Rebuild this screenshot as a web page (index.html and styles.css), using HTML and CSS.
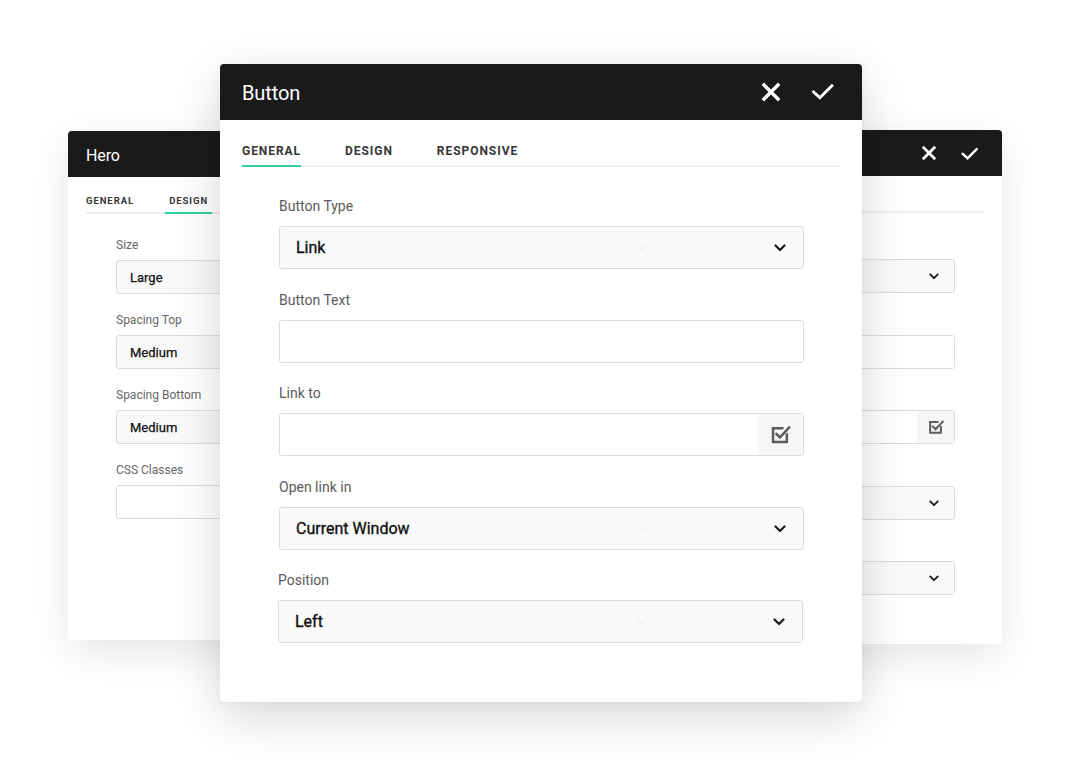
FILE: index.html
```html
<!DOCTYPE html>
<html lang="en">
<head>
<meta charset="utf-8">
<title>Button settings</title>
<link rel="stylesheet" href="styles.css">
</head>
<body>
<div class="desk">

  <section class="panel back hero">
    <header class="phead small">
      <h2>Hero</h2>
    </header>
    <nav class="tabs stabs">
      <span class="tab">GENERAL</span>
      <span class="tab active">DESIGN</span>
    </nav>
    <div class="form sform">
      <div class="field"><label>Size</label><div class="select"><span>Large</span></div></div>
      <div class="field"><label>Spacing Top</label><div class="select"><span>Medium</span></div></div>
      <div class="field"><label>Spacing Bottom</label><div class="select"><span>Medium</span></div></div>
      <div class="field"><label>CSS Classes</label><div class="input"></div></div>
    </div>
  </section>

  <section class="panel back side">
    <header class="phead small">
      <h2>Column</h2>
      <div class="acts">
        <svg class="ico-x" viewBox="0 0 24 24"><path d="M5 5L19 19M19 5L5 19"/></svg>
        <svg class="ico-ok" viewBox="0 0 24 24"><path d="M3.5 12.5L9.5 18L21 6.5"/></svg>
      </div>
    </header>
    <nav class="tabs stabs">
      <span class="tab active">GENERAL</span>
      <span class="tab">DESIGN</span>
    </nav>
    <div class="form sform">
      <div class="field"><label>Width</label><div class="select"><span>Auto</span><svg class="chev" viewBox="0 0 12 8"><path d="M1.5 1.5L6 6L10.5 1.5"/></svg></div></div>
      <div class="field"><label>Title</label><div class="input"></div></div>
      <div class="field"><label>Link to</label><div class="input link"><div class="linkbtn"><svg class="ico-link" viewBox="0 0 20 20"><path d="M15.5 10v6.5h-12v-12h8"/><path d="M6.5 9.5l3 3L17.5 4"/></svg></div></div></div>
      <div class="field"><label>Alignment</label><div class="select"><span>Left</span><svg class="chev" viewBox="0 0 12 8"><path d="M1.5 1.5L6 6L10.5 1.5"/></svg></div></div>
      <div class="field"><label>Visibility</label><div class="select"><span>All</span><svg class="chev" viewBox="0 0 12 8"><path d="M1.5 1.5L6 6L10.5 1.5"/></svg></div></div>
    </div>
  </section>

  <section class="panel main">
    <header class="phead">
      <h2>Button</h2>
      <div class="acts">
        <svg class="ico-x" viewBox="0 0 24 24"><path d="M5 5L19 19M19 5L5 19"/></svg>
        <svg class="ico-ok" viewBox="0 0 24 24"><path d="M3.5 12.5L9.5 18L21 6.5"/></svg>
      </div>
    </header>
    <nav class="tabs mtabs">
      <span class="tab active">GENERAL</span>
      <span class="tab">DESIGN</span>
      <span class="tab">RESPONSIVE</span>
    </nav>
    <div class="form mform">
      <div class="field">
        <label>Button Type</label>
        <div class="select"><span>Link</span><svg class="ghost" viewBox="0 0 12 8"><path d="M1.5 1.5L6 6L10.5 1.5"/></svg><svg class="chev" viewBox="0 0 12 8"><path d="M1.5 1.5L6 6L10.5 1.5"/></svg></div>
      </div>
      <div class="field">
        <label>Button Text</label>
        <div class="input"></div>
      </div>
      <div class="field">
        <label>Link to</label>
        <div class="input link"><div class="linkbtn"><svg class="ico-link" viewBox="0 0 20 20"><path d="M15.5 10v6.5h-12v-12h8"/><path d="M6.5 9.5l3 3L17.5 4"/></svg></div></div>
      </div>
      <div class="field">
        <label>Open link in</label>
        <div class="select"><span>Current Window</span><svg class="ghost" viewBox="0 0 12 8"><path d="M1.5 1.5L6 6L10.5 1.5"/></svg><svg class="chev" viewBox="0 0 12 8"><path d="M1.5 1.5L6 6L10.5 1.5"/></svg></div>
      </div>
      <div class="field shift">
        <label>Position</label>
        <div class="select"><span>Left</span><svg class="ghost" viewBox="0 0 12 8"><path d="M1.5 1.5L6 6L10.5 1.5"/></svg><svg class="chev" viewBox="0 0 12 8"><path d="M1.5 1.5L6 6L10.5 1.5"/></svg></div>
      </div>
    </div>
  </section>

</div>
</body>
</html>
```

FILE: styles.css
```css
* { box-sizing: border-box; }

html, body {
  margin: 0;
  padding: 0;
  background: #ffffff;
}

body {
  font-family: Roboto, "Liberation Sans", Arial, sans-serif;
  color: #222;
}

.desk {
  position: relative;
  width: 1070px;
  height: 774px;
  overflow: hidden;
  background: #fff;
}

/* ---------- panels (windows on a canvas) ---------- */
.panel {
  position: absolute;
  background: #fff;
  border-radius: 4px;
  display: flex;
  flex-direction: column;
}

.hero {
  left: 68px;
  top: 131px;
  width: 420px;
  height: 509px;
  box-shadow: 0 12px 40px rgba(0, 0, 0, 0.10);
}

.side {
  left: 580px;
  top: 130px;
  width: 422px;
  height: 514px;
  box-shadow: 0 12px 40px rgba(0, 0, 0, 0.10);
}

.main {
  left: 220px;
  top: 64px;
  width: 642px;
  height: 638px;
  z-index: 2;
  box-shadow: 0 14px 50px rgba(0, 0, 0, 0.16), 0 2px 8px rgba(0, 0, 0, 0.04);
}

/* ---------- headers ---------- */
.phead {
  flex: none;
  height: 56px;
  background: #1a1a1a;
  border-radius: 4px 4px 0 0;
  display: flex;
  align-items: center;
  justify-content: space-between;
  padding: 2px 27px 0 22px;
}

.phead h2 {
  margin: 0;
  font-size: 20px;
  font-weight: 400;
  color: #fff;
  letter-spacing: -0.1px;
}

.acts {
  display: flex;
  align-items: center;
  gap: 27px;
}

.acts svg {
  fill: none;
  stroke: #fff;
  stroke-linecap: square;
  stroke-linejoin: miter;
}

.main .acts { margin-top: -2px; }
.main .ico-x { width: 24px; height: 24px; stroke-width: 3.4; }
.main .ico-ok { width: 25px; height: 25px; stroke-width: 2.8; margin-top: -1px; }

.phead.small {
  height: 46px;
  padding: 0 23px 0 18px;
}

.hero .phead.small { padding-top: 3px; }

.phead.small h2 { font-size: 16px; }

.phead.small .acts { gap: 22px; }
.phead.small .ico-x { width: 18px; height: 18px; stroke-width: 3.6; }
.phead.small .ico-ok { width: 19px; height: 19px; stroke-width: 3; }

/* ---------- tabs ---------- */
.tabs {
  display: flex;
  flex: none;
}

.tab {
  font-weight: 700;
  color: #363636;
  border-bottom: 2px solid transparent;
  margin-bottom: -2px;
}

.tab.active { border-bottom-color: #35d39b; }

.mtabs {
  margin: 0 21px 0 22px;
  gap: 44px;
  border-bottom: 2px solid #efefef;
}

.mtabs .tab {
  font-size: 12px;
  line-height: 16px;
  letter-spacing: 0.95px;
  padding: 23px 0 6px;
}

.stabs {
  margin: 0 17px 0 18px;
  gap: 27px;
  border-bottom: 2px solid #efefef;
}

.stabs .tab {
  font-size: 9.5px;
  line-height: 12px;
  letter-spacing: 0.95px;
  padding: 18px 4px 5px;
}

.hero .stabs .tab:first-child { margin-left: -4px; }

/* ---------- forms ---------- */
.form {
  display: flex;
  flex-direction: column;
}

.field label {
  display: block;
}

.select, .input {
  position: relative;
  border: 1px solid #dcdcdc;
  border-radius: 3px;
  display: flex;
  align-items: center;
}

.select { background: #f9f9f9; }
.input { background: #fff; }

.select span {
  font-weight: 400;
  color: #111;
  -webkit-text-stroke: 0.35px #111;
}

.chev {
  position: absolute;
  fill: none;
  stroke: #1a1a1a;
  stroke-width: 2.2;
  stroke-linecap: round;
  stroke-linejoin: round;
}

.ghost {
  position: absolute;
  left: 355px;
  top: 16px;
  width: 14px;
  height: 9px;
  fill: none;
  stroke: #f1f1f1;
  stroke-width: 1.2;
}

.linkbtn {
  margin-left: auto;
  align-self: stretch;
  background: #f6f6f6;
  display: flex;
  align-items: center;
  justify-content: center;
}

.ico-link {
  fill: none;
  stroke: #5d5d5d;
  stroke-width: 2.2;
  stroke-linecap: square;
}

/* main form */
.mform {
  padding: 29px 58px 0 59px;
  gap: 20.5px;
}

.mform label {
  font-size: 14px;
  line-height: 20px;
  color: #5a5a5a;
  margin-bottom: 10px;
}

.mform .select, .mform .input { height: 43px; }

.mform .select span { font-size: 16px; padding-left: 16px; }

.mform .chev { right: 17px; top: 17px; width: 12px; height: 8px; }

.mform .linkbtn { width: 45px; }
.mform .ico-link { width: 23px; height: 23px; }

.mform .shift { margin-left: -1px; margin-right: 1px; }

/* small back forms */
.sform {
  padding: 23px 47px 0 48px;
  gap: 18px;
}

.side .sform { gap: 18.5px; }

.sform label {
  font-size: 12px;
  line-height: 16px;
  color: #666;
  margin-bottom: 7px;
}

.sform .select, .sform .input { height: 34px; }

.sform .select span { font-size: 13px; padding-left: 13px; -webkit-text-stroke: 0.25px #111; }

.sform .chev { right: 15px; top: 13px; width: 10px; height: 7px; }

.sform .linkbtn { width: 37px; }
.sform .ico-link { width: 18px; height: 18px; }
```
